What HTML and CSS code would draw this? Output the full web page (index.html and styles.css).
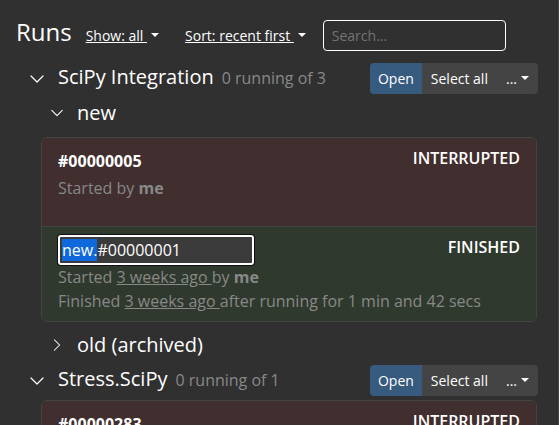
FILE: index.html
```html
<!DOCTYPE html>
<html lang="en">
<head>
<meta charset="utf-8">
<title>Runs</title>
<link rel="stylesheet" href="styles.css">
</head>
<body>
<main class="panel">
  <header class="toolbar">
    <h1 class="toolbar-title">Runs</h1>
    <button class="link-menu caret" type="button"><span class="link-text">Show: all </span></button>
    <button class="link-menu caret" type="button"><span class="link-text">Sort: recent first </span></button>
    <input class="search" type="search" placeholder="Search..." aria-label="Search runs">
  </header>

  <section class="group">
    <div class="group-head">
      <svg class="chevron" viewBox="0 0 16 16" aria-hidden="true"><path d="M2 5l6 6 6-6"/></svg>
      <div class="group-title">
        <h2 class="group-name">SciPy Integration</h2>
        <span class="count">0 running of 3</span>
      </div>
      <div class="actions">
        <button class="btn primary" type="button">Open</button>
        <button class="btn" type="button">Select all</button>
        <button class="btn caret" type="button">...</button>
      </div>
    </div>
    <div class="subgroup-head">
      <svg class="chevron small" viewBox="0 0 16 16" aria-hidden="true"><path d="M2 5l6 6 6-6"/></svg>
      <h3 class="group-name">new</h3>
    </div>
    <ul class="runs">
      <li class="run interrupted">
        <span class="status">INTERRUPTED</span>
        <div class="run-name">#00000005</div>
        <div class="meta">Started by <b>me</b></div>
      </li>
      <li class="run finished">
        <span class="status">FINISHED</span>
        <input class="rename" id="rename" type="text" value="new.#00000001" aria-label="Run name">
        <div class="meta">Started <u>3 weeks ago </u>by <b>me</b></div>
        <div class="meta">Finished <u>3 weeks ago </u>after running for 1 min and 42 secs</div>
      </li>
    </ul>
    <div class="subgroup-head">
      <svg class="chevron small" viewBox="0 0 16 16" aria-hidden="true"><path d="M5 2l6 6-6 6"/></svg>
      <h3 class="group-name">old (archived)</h3>
    </div>
  </section>

  <section class="group">
    <div class="group-head">
      <svg class="chevron" viewBox="0 0 16 16" aria-hidden="true"><path d="M2 5l6 6 6-6"/></svg>
      <div class="group-title">
        <h2 class="group-name">Stress.SciPy</h2>
        <span class="count">0 running of 1</span>
      </div>
      <div class="actions">
        <button class="btn primary" type="button">Open</button>
        <button class="btn" type="button">Select all</button>
        <button class="btn caret" type="button">...</button>
      </div>
    </div>
    <ul class="runs">
      <li class="run interrupted">
        <span class="status">INTERRUPTED</span>
        <div class="run-name">#00000283</div>
      </li>
    </ul>
  </section>
</main>
<script src="script.js"></script>
</body>
</html>
```
FILE: styles.css
```css
* {
  box-sizing: border-box;
}

body {
  margin: 0;
  height: 100vh;
  overflow: hidden;
  background: #303030;
  color: #fff;
  font: 16px/24px "Open Sans", "Noto Sans", sans-serif;
}

h1, h2, h3, ul {
  margin: 0;
  padding: 0;
  font-weight: 400;
}

button, input {
  font: inherit;
  color: inherit;
}

.panel {
  min-height: 100vh;
  padding: 20px 20px 0 16px;
  border-right: 1px solid #444;
}

.toolbar {
  display: flex;
  align-items: baseline;
  margin-bottom: 12px;
}

.toolbar-title {
  margin-right: 14px;
  font-size: 24px;
  line-height: 24px;
}

.link-menu {
  margin-right: 26px;
  padding: 0;
  border: 0;
  background: none;
  font-size: 14px;
  line-height: 20px;
}

.link-menu + .link-menu {
  margin-right: 17px;
}

.link-text {
  white-space: pre;
  text-decoration: underline;
}

.caret::after {
  content: "";
  display: inline-block;
  margin-left: 4px;
  border: 4px solid transparent;
  border-top-color: currentColor;
  border-bottom: 0;
  vertical-align: 4px;
}

.search {
  width: 183px;
  height: 31px;
  padding: 4px 8px;
  border: 1px solid #fff;
  border-radius: 4px;
  background: transparent;
  font-size: 14px;
  line-height: 20px;
}

.search::placeholder {
  color: #737373;
}

.group {
  padding-bottom: 5px;
}

.group-head {
  display: flex;
  align-items: center;
  margin-bottom: 4px;
  padding-left: 13px;
}

.group-title {
  display: flex;
  align-items: baseline;
  padding-bottom: 3px;
}

.group-title .group-name {
  line-height: 28px;
}

.group-name {
  font-size: 20px;
  line-height: 30px;
}

.chevron {
  width: 16px;
  height: 16px;
  margin-right: 13px;
  fill: none;
  stroke: #fff;
  stroke-width: 1.2;
  stroke-linecap: round;
  stroke-linejoin: round;
}

.chevron.small {
  width: 14px;
  height: 14px;
}

.count {
  margin-left: 8px;
  color: #888;
}

.actions {
  display: flex;
  margin-left: auto;
  border-radius: 4px;
  overflow: hidden;
}

.btn {
  padding: 5px 9px;
  border: 0;
  background: #444;
  font-size: 14px;
  line-height: 21px;
}

.btn.primary {
  padding: 5px 8px;
  background: #375a7f;
}

.subgroup-head {
  display: flex;
  align-items: center;
  padding-left: 34px;
}

.runs {
  margin: 9px 1px 8px 25px;
  border: 1px solid #444;
  border-radius: 6px;
  overflow: hidden;
  list-style: none;
}

.group-head + .runs {
  margin-top: 0;
}

.run {
  min-height: 88px;
  padding: 8px 16px;
}

.run + .run {
  border-top: 1px solid #444;
}

.interrupted {
  background: #412e2e;
}

.finished {
  background: #30392e;
}

.run-name {
  font-weight: 700;
  line-height: 30px;
}

.meta {
  color: #888;
}

.status {
  float: right;
  font-weight: 600;
}

.rename {
  display: block;
  width: 196px;
  height: 30px;
  padding: 1px 2px;
  border: 2px solid #fff;
  border-radius: 3px;
  outline: 0;
  background: #3b3b3b;
  box-shadow: 0 0 0 1px #101010;
}

.rename::selection {
  background: #0f68dc;
  color: #fff;
}
```
FILE: script.js
```js
// Start with the group prefix of the run name selected.
const rename = document.getElementById("rename");
rename.focus({ preventScroll: true });
rename.setSelectionRange(0, rename.value.indexOf("#"));
```
